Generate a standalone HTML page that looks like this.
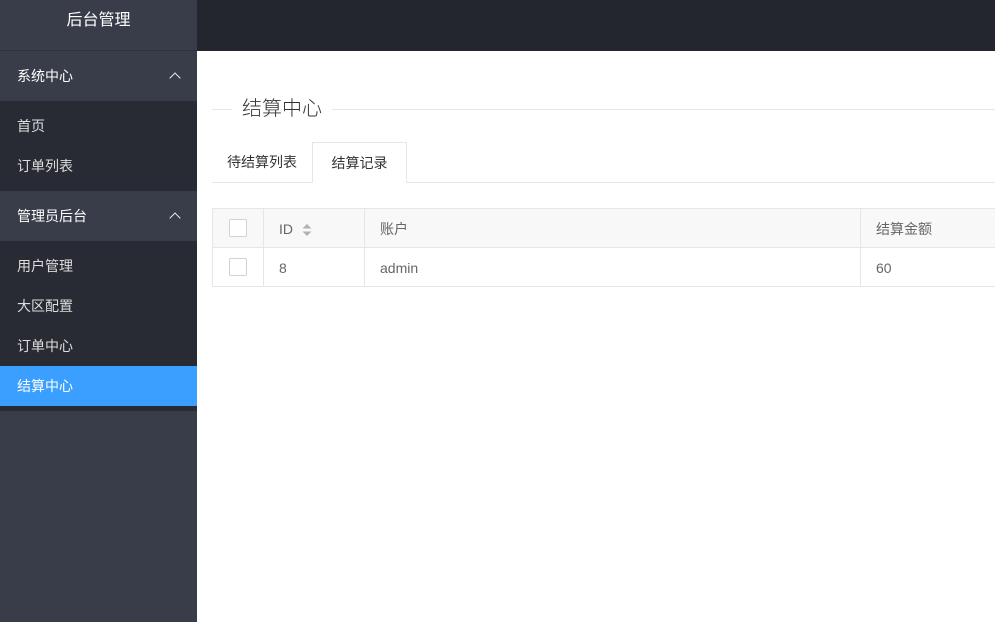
<!DOCTYPE html>
<html><head><meta charset="utf-8"><style>
*{margin:0;padding:0;box-sizing:border-box}
body{width:995px;height:622px;overflow:hidden;font-family:"Liberation Sans","Noto Sans CJK SC",sans-serif;font-size:14px;color:#666;background:#fff;position:relative}
.side{position:absolute;left:0;top:0;width:197px;height:622px;background:#393D49}
.logo{height:51px;line-height:42px;text-align:center;color:#fff;font-size:16px;border-bottom:1px solid #30333c}
.grp{height:50px;line-height:50px;padding-left:17px;color:#fff;font-size:14px;position:relative}
.grp:after{content:"";position:absolute;right:18px;top:23px;width:7px;height:7px;border-left:1.5px solid #eee;border-top:1.5px solid #eee;transform:rotate(45deg)}
.sub{background:#282B33;padding:5px 0}
.it{height:40px;line-height:40px;padding-left:17px;color:#ddd}
.it.on{background:#3a9fff;color:#fff}
.top{position:absolute;left:197px;top:0;right:0;height:51px;background:#23262E}
.leg{position:absolute;left:212px;top:109px;width:783px;border-top:1px solid #e6e6e6}
.leg span{position:absolute;left:20px;top:-14px;background:#fff;padding:0 10px;font-size:20px;color:#333;line-height:26px;font-weight:300}
.tabs{position:absolute;left:212px;top:142px;width:783px;height:41px;border-bottom:1px solid #e6e6e6}
.tab{position:absolute;top:0;height:41px;line-height:40px;color:#333}
.tab.on{left:100px;width:95px;border:1px solid #e6e6e6;border-bottom-color:#fff;text-align:center;background:#fff}
table{position:absolute;left:212px;top:208px;width:790px;border-collapse:collapse}
td{border:1px solid #e6e6e6;height:39px;padding-left:15px;color:#666;padding-top:2px}
tr.h td{background:#f8f8f8}
.cb{display:inline-block;width:18px;height:18px;border:1px solid #d2d2d2;background:#fff;border-radius:2px;vertical-align:middle}
</style></head><body>
<div class="side">
<div class="logo">后台管理</div>
<div class="grp">系统中心</div>
<div class="sub"><div class="it">首页</div><div class="it">订单列表</div></div>
<div class="grp">管理员后台</div>
<div class="sub"><div class="it">用户管理</div><div class="it">大区配置</div><div class="it">订单中心</div><div class="it on">结算中心</div></div>
</div>
<div class="top"></div>
<div class="leg"><span>结算中心</span></div>
<div class="tabs"><div class="tab" style="left:15px">待结算列表</div><div class="tab on">结算记录</div></div>
<table>
<tr class="h"><td style="width:51px;padding-left:16px;padding-top:0"><span class="cb"></span></td><td style="width:101px">ID <svg width="10" height="14" style="vertical-align:middle;margin-left:5px"><path d="M5 1L9.5 5.5H0.5z M5 13L9.5 8.5H0.5z" fill="#b2b2b2"/></svg></td><td style="width:496px">账户</td><td>结算金额</td></tr>
<tr><td style="padding-left:16px;padding-top:0"><span class="cb"></span></td><td>8</td><td>admin</td><td>60</td></tr>
</table>
</body></html>
